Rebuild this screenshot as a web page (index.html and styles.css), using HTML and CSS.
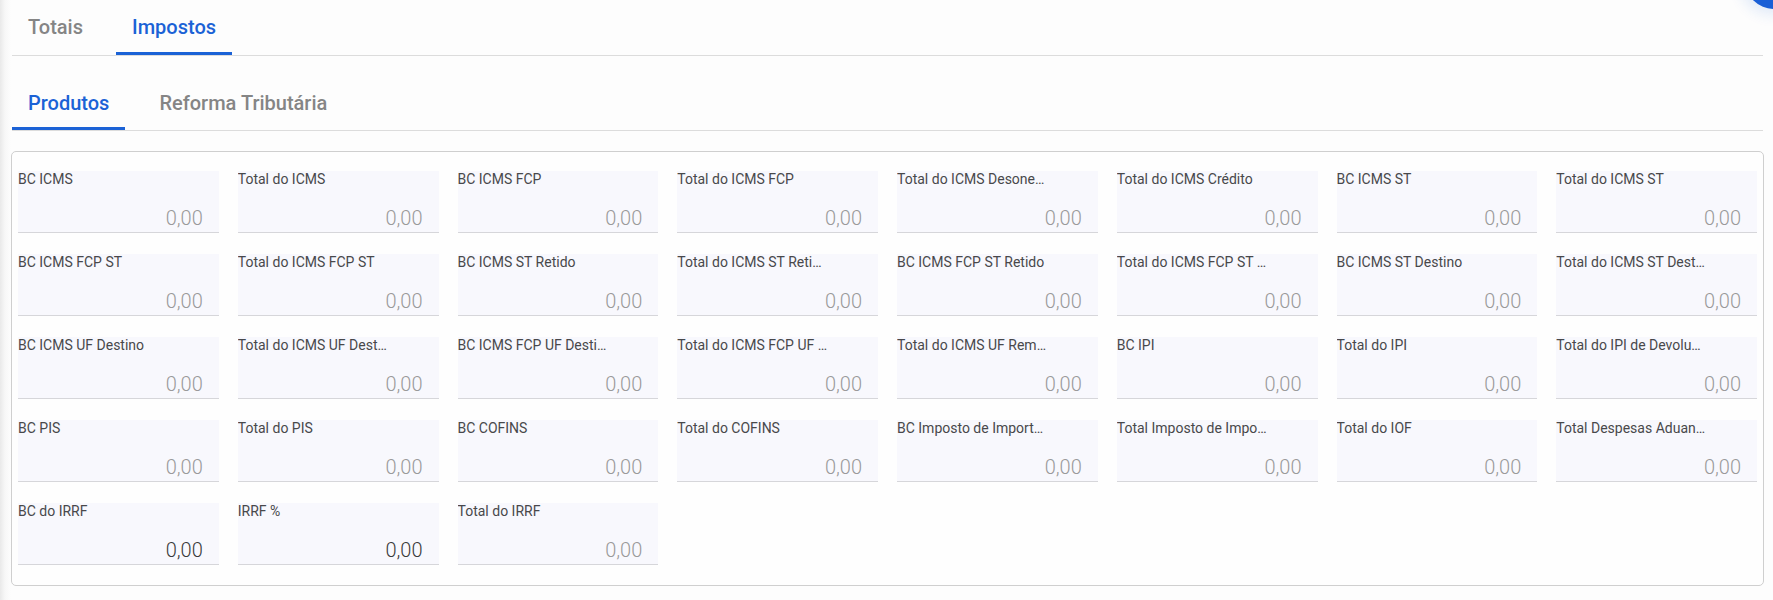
FILE: index.html
```html
<!DOCTYPE html>
<html lang="pt-BR">
<head>
<meta charset="utf-8">
<title>Impostos</title>
<link rel="stylesheet" href="styles.css">
</head>
<body>
<div class="page">
  <nav class="tabs tabs-main">
    <span class="tab">Totais</span>
    <span class="tab active">Impostos</span>
  </nav>
  <nav class="tabs tabs-sub">
    <span class="tab active">Produtos</span>
    <span class="tab">Reforma Tributária</span>
  </nav>
  <section class="panel">
    <div class="grid">
      <div class="field"><span class="label">BC ICMS</span><span class="value">0,00</span></div>
      <div class="field"><span class="label">Total do ICMS</span><span class="value">0,00</span></div>
      <div class="field"><span class="label">BC ICMS FCP</span><span class="value">0,00</span></div>
      <div class="field"><span class="label">Total do ICMS FCP</span><span class="value">0,00</span></div>
      <div class="field"><span class="label">Total do ICMS Desonerado</span><span class="value">0,00</span></div>
      <div class="field"><span class="label">Total do ICMS Crédito</span><span class="value">0,00</span></div>
      <div class="field"><span class="label">BC ICMS ST</span><span class="value">0,00</span></div>
      <div class="field"><span class="label">Total do ICMS ST</span><span class="value">0,00</span></div>

      <div class="field"><span class="label">BC ICMS FCP ST</span><span class="value">0,00</span></div>
      <div class="field"><span class="label">Total do ICMS FCP ST</span><span class="value">0,00</span></div>
      <div class="field"><span class="label">BC ICMS ST Retido</span><span class="value">0,00</span></div>
      <div class="field"><span class="label">Total do ICMS ST Retido</span><span class="value">0,00</span></div>
      <div class="field"><span class="label">BC ICMS FCP ST Retido</span><span class="value">0,00</span></div>
      <div class="field"><span class="label">Total do ICMS FCP ST Retido</span><span class="value">0,00</span></div>
      <div class="field"><span class="label">BC ICMS ST Destino</span><span class="value">0,00</span></div>
      <div class="field"><span class="label">Total do ICMS ST Destino</span><span class="value">0,00</span></div>

      <div class="field"><span class="label">BC ICMS UF Destino</span><span class="value">0,00</span></div>
      <div class="field"><span class="label">Total do ICMS UF Destino</span><span class="value">0,00</span></div>
      <div class="field"><span class="label">BC ICMS FCP UF Destino</span><span class="value">0,00</span></div>
      <div class="field"><span class="label">Total do ICMS FCP UF Destino</span><span class="value">0,00</span></div>
      <div class="field"><span class="label">Total do ICMS UF Remetente</span><span class="value">0,00</span></div>
      <div class="field"><span class="label">BC IPI</span><span class="value">0,00</span></div>
      <div class="field"><span class="label">Total do IPI</span><span class="value">0,00</span></div>
      <div class="field"><span class="label">Total do IPI de Devolução</span><span class="value">0,00</span></div>

      <div class="field"><span class="label">BC PIS</span><span class="value">0,00</span></div>
      <div class="field"><span class="label">Total do PIS</span><span class="value">0,00</span></div>
      <div class="field"><span class="label">BC COFINS</span><span class="value">0,00</span></div>
      <div class="field"><span class="label">Total do COFINS</span><span class="value">0,00</span></div>
      <div class="field"><span class="label">BC Imposto de Importação</span><span class="value">0,00</span></div>
      <div class="field"><span class="label">Total Imposto de Importação</span><span class="value">0,00</span></div>
      <div class="field"><span class="label">Total do IOF</span><span class="value">0,00</span></div>
      <div class="field"><span class="label">Total Despesas Aduaneiras</span><span class="value">0,00</span></div>

      <div class="field"><span class="label">BC do IRRF</span><span class="value editable">0,00</span></div>
      <div class="field"><span class="label">IRRF %</span><span class="value editable">0,00</span></div>
      <div class="field"><span class="label">Total do IRRF</span><span class="value">0,00</span></div>
    </div>
  </section>
</div>
<div class="fab"></div>
</body>
</html>
```

FILE: styles.css
```css
html, body {
  margin: 0;
  height: 100%;
}
body {
  font-family: Roboto, "Noto Sans", Arial, sans-serif;
  background: linear-gradient(to right, #e9e9e9 0, #f7f7f7 5px, #fdfdfd 11px, #fdfdfd 100%);
  overflow: hidden;
  position: relative;
}
.page {
  padding: 0 10px 0 12px;
}
.tabs {
  display: flex;
  gap: 17px;
  border-bottom: 1px solid #dcdcdc;
}
.tabs-main {
  height: 55px;
}
.tabs-sub {
  margin-top: 20px;
  height: 54px;
  gap: 18px;
}
.tab {
  display: flex;
  align-items: center;
  padding: 0 16px;
  font-size: 20px;
  font-weight: 500;
  color: #858585;
  border-bottom: 3px solid transparent;
  box-sizing: border-box;
  height: 100%;
  padding-top: 1px;
}
.tabs-sub .tab {
  padding-top: 2px;
}
.tab.active {
  color: #1b62d6;
  border-bottom-color: #1b62d6;
}
.panel {
  margin-top: 20px;
  margin-left: -1px;
  margin-right: -1px;
  border: 1px solid #cfcfcf;
  border-radius: 5px;
  background: #fefefe;
  padding: 19px 6px 20px 6px;
}
.grid {
  display: grid;
  grid-template-columns: repeat(8, 1fr);
  column-gap: 19px;
  row-gap: 21px;
}
.field {
  height: 61px;
  background: #f8f8fd;
  border-bottom: 1px solid #d6d6da;
  display: flex;
  flex-direction: column;
  justify-content: space-between;
  min-width: 0;
}
.label {
  font-size: 14px;
  font-weight: 400;
  color: #48484b;
  line-height: 16px;
  padding-top: 0;
  white-space: nowrap;
  overflow: hidden;
  text-overflow: ellipsis;
  max-width: 150px;
}
.value {
  align-self: flex-end;
  padding-right: 16px;
  font-size: 20px;
  font-weight: 300;
  line-height: 24px;
  padding-bottom: 2px;
  color: #9a9a9a;
}
.value.editable {
  color: #3a3a3a;
  font-weight: 300;
}
.fab {
  position: absolute;
  left: 1745px;
  top: -49px;
  width: 58px;
  height: 58px;
  border-radius: 50%;
  background: #1a5fd6;
  box-shadow: 0 0 14px 6px rgba(26, 95, 214, 0.12);
}
```
